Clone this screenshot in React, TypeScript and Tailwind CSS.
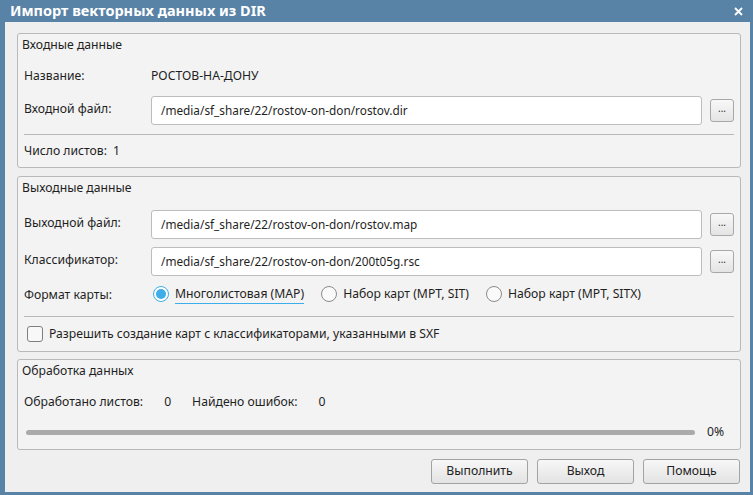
import React from "react";

const font = { fontFamily: '"Noto Sans", "Open Sans", sans-serif' };

function Group({ title, children, className = "" }: { title: string; children: React.ReactNode; className?: string }) {
  return (
    <div className={"rounded-[3px] border border-[#b9b9b9] bg-[#f3f3f3] " + className}>
      <div className="h-[22px] pl-[4px] leading-[22px]">{title}</div>
      {children}
    </div>
  );
}

function PathInput({ value }: { value: string }) {
  return (
    <div className="flex h-[29px] items-center">
      <div className="flex h-[29px] w-[551px] items-center rounded-[3px] border border-[#bdbdbd] bg-white pl-[9px] text-[11.8px]">
        {value}
      </div>
      <button className="ml-[8px] flex h-[23px] w-[24px] items-center justify-center rounded-[3px] border border-[#a8a8a8] bg-gradient-to-b from-[#f8f8f8] to-[#e4e4e4] pb-[4px] text-[10px] text-[#333]">
        ...
      </button>
    </div>
  );
}

function Radio({ checked, label, focus }: { checked?: boolean; label: string; focus?: boolean }) {
  return (
    <div className="flex items-center">
      {checked ? (
        <span className="flex h-[16px] w-[16px] items-center justify-center rounded-full border border-[#3daee9] bg-white">
          <span className="h-[10px] w-[10px] rounded-full bg-[#3daee9]" />
        </span>
      ) : (
        <span className="h-[16px] w-[16px] rounded-full border border-[#8a8a8a] bg-[#fafafa]" />
      )}
      <span className={"ml-[6px] " + (focus ? "border-b border-[#3daee9] leading-[18px]" : "")}>{label}</span>
    </div>
  );
}

function Button({ label }: { label: string }) {
  return (
    <button className="h-[25px] w-[97px] rounded-[3px] border border-[#a3a3a3] bg-gradient-to-b from-[#f7f7f7] to-[#e3e3e3] text-[#222]">
      {label}
    </button>
  );
}

export default function App() {
  return (
    <div
      className="flex h-[495px] w-[753px] flex-col bg-[#5883a6] pb-[3px] pl-[5px] pr-[3px] text-[12.2px] text-[#1f1f1f]"
      style={font}
    >
      <div className="flex h-[22px] shrink-0 items-center justify-between pl-[5px] pr-[7px]">
        <span className="text-[14.5px] font-bold text-white">Импорт векторных данных из DIR</span>
        <svg width="9" height="9" viewBox="0 0 9 9">
          <path d="M1 1 L8 8 M8 1 L1 8" stroke="white" strokeWidth="1.8" />
        </svg>
      </div>
      <div className="flex flex-1 flex-col bg-[#efefef] pl-[12px] pr-[9px] pt-[11px]">
        <Group title="Входные данные" className="pb-[6px]">
          <div className="mt-[10px] flex h-[20px] items-center pl-[6px]">
            <span className="w-[127px]">Название:</span>
            <span>РОСТОВ-НА-ДОНУ</span>
          </div>
          <div className="mt-[10px] flex pl-[6px]">
            <span className="w-[127px] pt-[4px]">Входной файл:</span>
            <PathInput value="/media/sf_share/22/rostov-on-don/rostov.dir" />
          </div>
          <div className="ml-[6px] mr-[6px] mt-[9px] h-px bg-[#b9b9b9]" />
          <div className="mt-[6px] flex h-[20px] items-center pl-[6px]">
            <span>Число листов:</span>
            <span className="ml-[6px]">1</span>
          </div>
        </Group>

        <Group title="Выходные данные" className="mt-[8px] pb-[6px]">
          <div className="mt-[11px] flex pl-[6px]">
            <span className="w-[127px] pt-[4px]">Выходной файл:</span>
            <PathInput value="/media/sf_share/22/rostov-on-don/rostov.map" />
          </div>
          <div className="mt-[8px] flex pl-[6px]">
            <span className="w-[127px] pt-[4px]">Классификатор:</span>
            <PathInput value="/media/sf_share/22/rostov-on-don/200t05g.rsc" />
          </div>
          <div className="mt-[8px] flex h-[20px] items-center pl-[6px]">
            <span className="w-[129px] pt-[2px]">Формат карты:</span>
            <div className="flex items-center gap-[17px]">
              <Radio checked focus label="Многолистовая (MAP)" />
              <Radio label="Набор карт (MPT, SIT)" />
              <Radio label="Набор карт (MPT, SITX)" />
            </div>
          </div>
          <div className="ml-[6px] mr-[6px] mt-[12px] h-px bg-[#b9b9b9]" />
          <div className="mt-[6px] flex h-[22px] items-center pl-[9px]">
            <span className="h-[16px] w-[16px] rounded-[3px] border border-[#7f7f7f] bg-[#f8f8f8]" />
            <span className="ml-[6px]">Разрешить создание карт с классификаторами, указанными в SXF</span>
          </div>
        </Group>

        <Group title="Обработка данных" className="mt-[7px] pb-[7px]">
          <div className="mt-[10px] flex h-[20px] items-center pl-[6px]">
            <span>Обработано листов:</span>
            <span className="ml-[21px]">0</span>
            <span className="ml-[21px]">Найдено ошибок:</span>
            <span className="ml-[21px]">0</span>
          </div>
          <div className="mt-[10px] flex h-[20px] items-center pl-[8px]">
            <div className="h-[5px] w-[669px] rounded-full bg-[#aaaaaa]" />
            <span className="ml-[12px]">0%</span>
          </div>
        </Group>

        <div className="mt-[9px] flex justify-end gap-[9px] pr-[1px]">
          <Button label="Выполнить" />
          <Button label="Выход" />
          <Button label="Помощь" />
        </div>
      </div>
    </div>
  );
}
